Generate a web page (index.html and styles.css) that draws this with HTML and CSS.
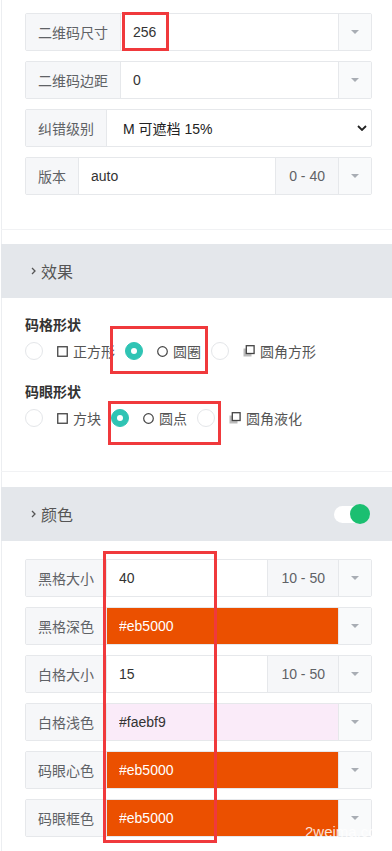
FILE: index.html
```html
<!DOCTYPE html>
<html lang="zh-CN">

<head>
    <meta charset="UTF-8">
    <meta name="viewport" content="width=device-width, initial-scale=1.0">
    <title>二维码设置</title>
    <link rel="stylesheet" href="styles.css">
</head>

<body>
    <div class="page">

        <section class="block-basic">
            <div class="field">
                <span class="field-label">二维码尺寸</span>
                <input class="field-input" type="text" value="256">
                <span class="field-drop"><i class="caret"></i></span>
            </div>
            <div class="field">
                <span class="field-label">二维码边距</span>
                <input class="field-input" type="text" value="0">
                <span class="field-drop"><i class="caret"></i></span>
            </div>
            <div class="field">
                <span class="field-label">纠错级别</span>
                <div class="field-select">
                    <span>M 可遮档 15%</span>
                    <svg width="10" height="6" viewBox="0 0 10 6"><path d="M1 1l4 4 4-4" fill="none" stroke="#222" stroke-width="1.8"/></svg>
                </div>
            </div>
            <div class="field">
                <span class="field-label">版本</span>
                <input class="field-input" type="text" value="auto">
                <span class="field-addon">0 - 40</span>
                <span class="field-drop"><i class="caret"></i></span>
            </div>
        </section>

        <section class="block">
            <div class="block-head">
                <svg class="chev" width="5" height="8" viewBox="0 0 5 8"><path d="M1 1l3 3-3 3" fill="none" stroke="#555" stroke-width="1.3"/></svg>
                效果
            </div>
            <div class="block-body effect">
                <div class="opt-title">码格形状</div>
                <div class="radio-row">
                    <label class="radio"><span class="dot"></span><span class="opt-text"><svg width="11" height="11" viewBox="0 0 11 11"><rect x="0.75" y="0.75" width="9.5" height="9.5" fill="none" stroke="#444" stroke-width="1.3"/></svg>正方形</span></label>
                    <label class="radio"><span class="dot on"></span><span class="opt-text"><svg width="11" height="11" viewBox="0 0 11 11"><circle cx="5.5" cy="5.5" r="4.8" fill="none" stroke="#444" stroke-width="1.2"/></svg>圆圈</span></label>
                    <label class="radio"><span class="dot"></span><span class="opt-text"><svg width="12" height="12" viewBox="0 0 12 12"><rect x="0.5" y="3.5" width="8" height="8" fill="#bbb"/><rect x="3.3" y="0.7" width="7.8" height="7.8" fill="#fff" stroke="#444" stroke-width="1.3"/></svg>圆角方形</span></label>
                </div>
                <div class="opt-title second">码眼形状</div>
                <div class="radio-row">
                    <label class="radio"><span class="dot"></span><span class="opt-text"><svg width="11" height="11" viewBox="0 0 11 11"><rect x="0.75" y="0.75" width="9.5" height="9.5" fill="none" stroke="#444" stroke-width="1.3"/></svg>方块</span></label>
                    <label class="radio"><span class="dot on"></span><span class="opt-text"><svg width="11" height="11" viewBox="0 0 11 11"><circle cx="5.5" cy="5.5" r="4.8" fill="none" stroke="#444" stroke-width="1.2"/></svg>圆点</span></label>
                    <label class="radio"><span class="dot"></span><span class="opt-text"><svg width="12" height="12" viewBox="0 0 12 12"><rect x="0.5" y="3.5" width="8" height="8" fill="#bbb"/><rect x="3.3" y="0.7" width="7.8" height="7.8" fill="#fff" stroke="#444" stroke-width="1.3"/></svg>圆角液化</span></label>
                </div>
            </div>
        </section>

        <section class="block">
            <div class="block-head">
                <svg class="chev" width="5" height="8" viewBox="0 0 5 8"><path d="M1 1l3 3-3 3" fill="none" stroke="#555" stroke-width="1.3"/></svg>
                颜色
                <span class="switch"><span class="knob"></span></span>
            </div>
            <div class="block-body colors">
                <div class="field">
                    <span class="field-label">黑格大小</span>
                    <input class="field-input" type="text" value="40">
                    <span class="field-addon">10 - 50</span>
                    <span class="field-drop"><i class="caret"></i></span>
                </div>
                <div class="field">
                    <span class="field-label">黑格深色</span>
                    <input class="field-input swatch dark" type="text" value="#eb5000" style="background-color: #eb5000;">
                    <span class="field-drop"><i class="caret"></i></span>
                </div>
                <div class="field">
                    <span class="field-label">白格大小</span>
                    <input class="field-input" type="text" value="15">
                    <span class="field-addon">10 - 50</span>
                    <span class="field-drop"><i class="caret"></i></span>
                </div>
                <div class="field">
                    <span class="field-label">白格浅色</span>
                    <input class="field-input swatch" type="text" value="#faebf9" style="background-color: #faebf9;">
                    <span class="field-drop"><i class="caret"></i></span>
                </div>
                <div class="field">
                    <span class="field-label">码眼心色</span>
                    <input class="field-input swatch dark" type="text" value="#eb5000" style="background-color: #eb5000;">
                    <span class="field-drop"><i class="caret"></i></span>
                </div>
                <div class="field">
                    <span class="field-label">码眼框色</span>
                    <input class="field-input swatch dark" type="text" value="#eb5000" style="background-color: #eb5000;">
                    <span class="field-drop"><i class="caret"></i></span>
                </div>
            </div>
        </section>
    </div>

    <!-- annotation marks drawn over the screenshot -->
    <div class="mark mark-size"></div>
    <div class="mark mark-dot"></div>
    <div class="mark mark-eye"></div>
    <div class="mark mark-colors"></div>
    <div class="watermark">2weima.com</div>
</body>

</html>
```

FILE: styles.css
```css
* {
    box-sizing: border-box;
}

body {
    margin: 0;
    position: relative;
    font-family: "Liberation Sans", "Noto Sans CJK SC", sans-serif;
    font-size: 14px;
    color: #606266;
    background: #fff;
}

.page {
    margin-left: 1px;
    min-height: 851px;
    box-shadow: inset 1px 0 0 #eceef1;
}

.block-basic {
    display: flex;
    flex-direction: column;
    gap: 10px;
    padding: 13px 20px 34px 24px;
    border-bottom: 1px solid #f1f2f4;
}

/* input group */
.field {
    display: flex;
    height: 38px;
    border: 1px solid #e6e8eb;
    border-radius: 2px;
    background: #fff;
}

.field-label {
    display: flex;
    align-items: center;
    padding: 0 12px;
    background: #f6f7f9;
    border-right: 1px solid #e6e8eb;
    white-space: nowrap;
    color: #5f6266;
}

.field-input {
    flex: 1;
    min-width: 0;
    border: 0;
    outline: 0;
    padding: 0 12px;
    font: inherit;
    color: #333;
    background: transparent;
}

.field-input.dark {
    color: #fff;
}

.field-addon {
    display: flex;
    align-items: center;
    padding: 0 13px;
    background: #f6f7f9;
    border-left: 1px solid #e6e8eb;
    white-space: nowrap;
}

.field-drop {
    display: flex;
    align-items: center;
    justify-content: center;
    width: 33px;
    border-left: 1px solid #e6e8eb;
    background: #f9fafb;
}

.caret {
    width: 0;
    height: 0;
    border-left: 4px solid transparent;
    border-right: 4px solid transparent;
    border-top: 4px solid #a9adb4;
}

.field-select {
    flex: 1;
    display: flex;
    align-items: center;
    justify-content: space-between;
    padding: 0 4px 0 16px;
    color: #222;
}

/* collapsible blocks */
.block {
    margin-top: 14px;
}

.block + .block {
    margin-top: 15px;
}

.block-head {
    display: flex;
    align-items: center;
    height: 54px;
    padding: 0 22px 0 30px;
    background: #e4e7eb;
    font-size: 16px;
    color: #555;
}

.chev {
    margin-right: 5px;
}

.switch {
    position: relative;
    margin-left: auto;
    width: 36px;
    height: 17px;
    border-radius: 9px;
    background: #fff;
}

.knob {
    position: absolute;
    right: 0;
    top: -2px;
    width: 20px;
    height: 20px;
    border-radius: 50%;
    background: #1bbf71;
}

.block-body {
    padding: 17px 20px 43px 24px;
    border-bottom: 1px solid #f1f2f4;
}

.opt-title {
    line-height: 20px;
    font-weight: bold;
    color: #333;
}

.opt-title.second {
    margin-top: 21px;
}

.radio-row {
    display: flex;
    align-items: center;
    height: 20px;
    margin-top: 6px;
}

.radio {
    display: flex;
    align-items: center;
    margin-right: 10px;
}

.dot {
    position: relative;
    width: 18px;
    height: 18px;
    margin-right: 14px;
    border: 1.5px solid #e4e6e9;
    border-radius: 50%;
    background: #fff;
}

.dot.on {
    border-color: #2fc4b4;
    background: #2fc4b4;
}

.dot.on::after {
    content: "";
    position: absolute;
    left: 50%;
    top: 50%;
    width: 6px;
    height: 6px;
    margin: -3px 0 0 -3px;
    border-radius: 50%;
    background: #fff;
}

.opt-text {
    display: flex;
    align-items: center;
    gap: 5px;
    color: #555;
    white-space: nowrap;
}

.colors {
    display: flex;
    flex-direction: column;
    gap: 10px;
    padding: 18px 20px 20px 24px;
    border-bottom: 0;
}

/* red annotation boxes */
.mark {
    position: absolute;
    border: 3px solid #f0393c;
}

.mark-size {
    left: 122px;
    top: 12px;
    width: 47px;
    height: 39px;
}

.mark-dot {
    left: 110px;
    top: 326px;
    width: 98px;
    height: 48px;
}

.mark-eye {
    left: 108px;
    top: 401px;
    width: 113px;
    height: 44px;
}

.mark-colors {
    left: 103px;
    top: 551px;
    width: 114px;
    height: 292px;
}

.watermark {
    position: absolute;
    left: 305px;
    top: 823px;
    font-size: 15px;
    color: rgba(255, 255, 255, 0.85);
}
```
